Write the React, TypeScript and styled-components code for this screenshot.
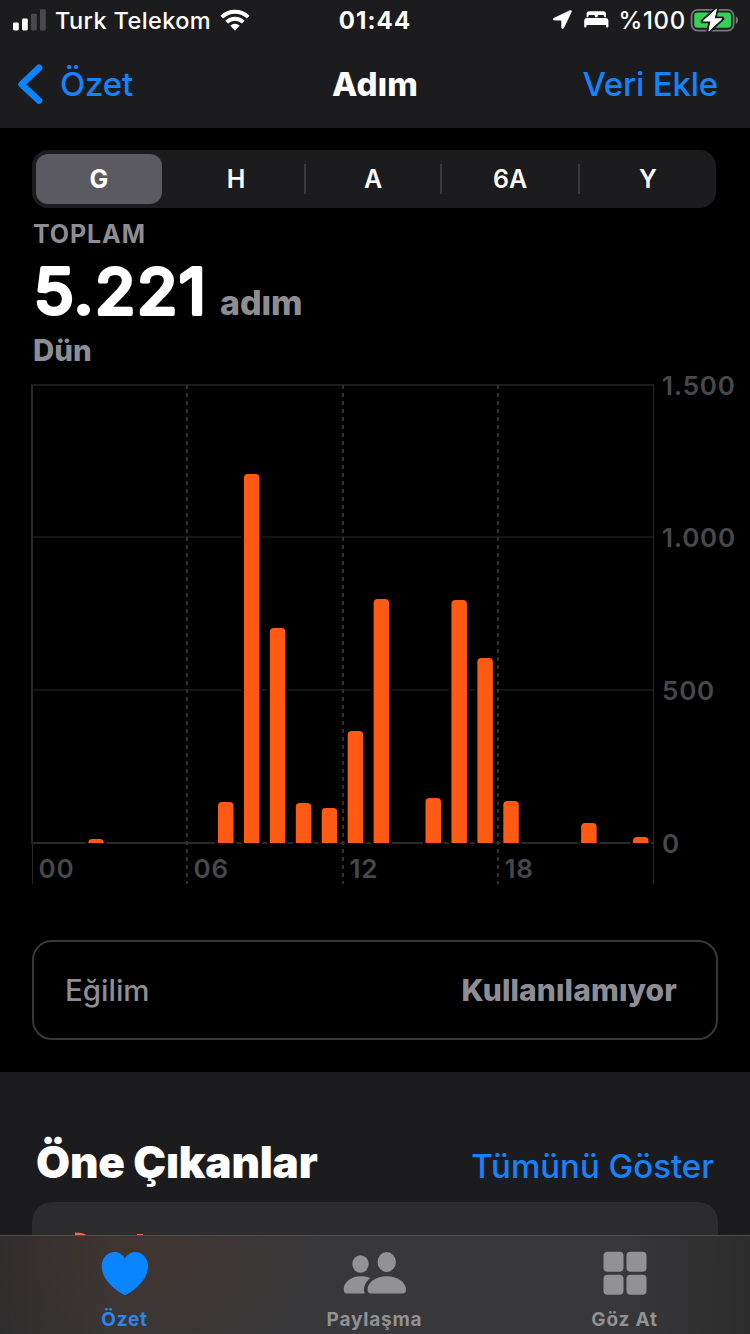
import React from "react";
import styled, { createGlobalStyle } from "styled-components";

const Global = createGlobalStyle`
  * { box-sizing: border-box; }
  body { margin: 0; background: #000; }
`;

const BLUE = "#1583fb";
const GRAY = "#8e8d93";
const ORANGE = "#ff5a13";

const Screen = styled.div`
  width: 750px;
  height: 1334px;
  display: flex;
  flex-direction: column;
  overflow: hidden;
  background: #000;
  color: #fff;
  font-family: Inter, "Noto Sans", sans-serif;
`;

const Label = styled.span<{ $size: number; $weight?: number; $color?: string; $track?: number; $line?: number }>`
  font-size: ${(p) => p.$size}px;
  font-weight: ${(p) => p.$weight ?? 400};
  color: ${(p) => p.$color ?? "#fff"};
  letter-spacing: ${(p) => p.$track ?? 0}px;
  line-height: ${(p) => p.$line ?? 40}px;
  white-space: nowrap;
`;

const Header = styled.header`
  height: 128px;
  flex: none;
  background: #1c1c1e;
`;

const StatusBar = styled.div`
  height: 41px;
  display: grid;
  grid-template-columns: 1fr auto 1fr;
  align-items: center;
  padding: 0 11px;
`;

const StatusGroup = styled.div<{ $end?: boolean }>`
  display: flex;
  align-items: center;
  justify-content: ${(p) => (p.$end ? "flex-end" : "flex-start")};
  padding-left: ${(p) => (p.$end ? 0 : 2)}px;
  svg { display: block; flex: none; margin-bottom: 2px; }
`;

const Gap = styled.span<{ $w: number }>`
  flex: none;
  width: ${(p) => p.$w}px;
`;

const NavBar = styled.nav`
  height: 86px;
  display: grid;
  grid-template-columns: 1fr auto 1fr;
  align-items: center;
  padding: 0 17px;
`;

const BackLink = styled.a`
  display: flex;
  align-items: center;
  gap: 17px;
`;

const NavAction = styled.a`
  text-align: right;
  padding-right: 15px;
`;

const Content = styled.main`
  flex: 1;
  min-height: 0;
  overflow: hidden;
  display: flex;
  flex-direction: column;
`;

const Segments = styled.div`
  flex: none;
  margin: 22px 34px 0 32px;
  height: 58px;
  padding: 4px 0 4px 4px;
  border-radius: 16px;
  background: #1c1c1f;
  display: flex;
  align-items: center;
`;

const Segment = styled.button<{ $w: number; $active?: boolean }>`
  flex: none;
  width: ${(p) => p.$w}px;
  height: 50px;
  padding: 0;
  border: 0;
  border-radius: 12px;
  background: ${(p) => (p.$active ? "#5b5a60" : "transparent")};
  font-family: inherit;
`;

const Divider = styled.span<{ $hidden?: boolean }>`
  flex: none;
  width: 2px;
  height: 30px;
  margin-left: ${(p) => (p.$hidden ? "4px" : "0")};
  background: ${(p) => (p.$hidden ? "transparent" : "#3a3a3e")};
`;

const Summary = styled.section`
  flex: none;
  height: 176px;
  padding: 6px 33px 0;
  display: flex;
  flex-direction: column;
`;

const TotalRow = styled.div`
  height: 76px;
  display: flex;
  align-items: flex-end;
  svg { display: block; overflow: visible; }
`;

const ChartFrame = styled.figure`
  flex: none;
  margin: -8px 0 0;
  height: 516px;
  svg { display: block; overflow: visible; }
`;

const TrendCard = styled.div`
  flex: none;
  margin: 48px 32px 32px;
  height: 100px;
  border: 2px solid #38383a;
  border-radius: 20px;
  padding: 0 39px 0 31px;
  display: flex;
  align-items: center;
  justify-content: space-between;
`;

const Highlights = styled.section`
  flex: 1;
  background: #1c1c1e;
  padding: 65px 32px 0;
`;

const HighlightsHeader = styled.div`
  height: 65px;
  padding: 0 4px;
  display: flex;
  align-items: baseline;
  justify-content: space-between;
`;

const HighlightCard = styled.div`
  height: 60px;
  border-radius: 20px;
  background: #2c2c2e;
  svg { display: block; }
`;

const TabBar = styled.footer`
  flex: none;
  height: 99px;
  border-top: 1px solid #4d4d4e;
  display: grid;
  grid-template-columns: repeat(3, 250px);
  background:
    radial-gradient(ellipse 190px 130px at 135px 20px, rgba(72, 48, 38, 0.5), transparent),
    linear-gradient(90deg, #2d2d2e 0, #38383a 120px, #38383a 620px, #2c2c2d 750px);
`;

const Tab = styled.a`
  display: flex;
  flex-direction: column;
  align-items: center;
  padding: 15px 1px 0 0;
  svg { display: block; flex: none; }
`;

const SignalIcon = () => (
  <svg width="34" height="22" viewBox="0 0 34 22">
    <rect x="0" y="13.5" width="5.8" height="8" rx="1.4" fill="#fff" />
    <rect x="9" y="9.5" width="5.8" height="12" rx="1.4" fill="#fff" />
    <rect x="18" y="4.8" width="5.8" height="16.7" rx="1.4" fill="#4a4a4c" />
    <rect x="27" y="0.3" width="5.8" height="21.2" rx="1.4" fill="#4a4a4c" />
  </svg>
);

const WifiIcon = () => (
  <svg width="30" height="22" viewBox="0 0 30 22" fill="none" stroke="#fff" strokeWidth="3.9">
    <path d="M1.8 8.2a18.8 18.8 0 0 1 26.4 0" />
    <path d="M6.7 13.1a11.8 11.8 0 0 1 16.6 0" />
    <path d="M10.3 16.8a6.7 6.7 0 0 1 9.4 0L15 21.6z" fill="#fff" stroke="none" />
  </svg>
);

const LocationIcon = () => (
  <svg width="19" height="19" viewBox="0 0 19 19">
    <path d="M17.2.5.9 8.2c-1 .5-.8 1.9.4 1.9l7.3.1.1 7.4c0 1.2 1.5 1.4 2 .3L18.4 1.7c.4-.9-.4-1.6-1.2-1.2z" fill="#fff" stroke="#fff" strokeWidth="0.6" />
  </svg>
);

const BedIcon = () => (
  <svg width="25" height="17" viewBox="0 0 25 17" fill="#fff">
    <path d="M2.6 6.2V3c0-1.9.9-2.8 2.8-2.8h13.7c1.9 0 2.8.9 2.8 2.8v3.2h-1.7V5.4c0-1-.5-1.5-1.500-1.500h-3.700c-1 0-1.500.5-1.500 1.500v.8h-2.500v-.8c0-1-.5-1.500-1.500-1.500H5.800c-1 0-1.500.5-1.500 1.500v.8z" />
    <path d="M.2 15.600V10c0-1.900 1-2.900 2.900-2.900h18.400c1.900 0 2.900 1 2.900 2.900v5.600c0 1.300-2.300 1.300-2.300 0v-1.500H2.500v1.500c0 1.300-2.300 1.300-2.300 0z" />
  </svg>
);

const BatteryIcon = () => (
  <svg width="49" height="26" viewBox="0 0 49 26">
    <rect x="1.600" y="2.800" width="42" height="20.800" rx="6" fill="none" stroke="#77777a" strokeWidth="1.800" />
    <rect x="4.200" y="5.600" width="36.800" height="15.200" rx="3.200" fill="#33d158" />
    <path d="M45.800 9.500c3 1.200 3 6.200 0 7.400z" fill="#77777a" />
    <path d="M26.800 1.700 12.700 14.300h7.900l-2.200 10.200L32.400 11.600h-7.900z" fill="#fff" stroke="#1c1c1e" strokeWidth="4" strokeLinejoin="round" paintOrder="stroke" />
    <path d="M26.300 2.300 13.700 13.800h7.500l-2 9.700L31.400 12h-7.500z" fill="#fff" stroke="#fff" strokeWidth="1" strokeLinejoin="round" />
  </svg>
);

const BackIcon = () => (
  <svg width="26" height="42" viewBox="0 0 26 42">
    <path d="M22 4.800 4.500 21.300 22 37.600" fill="none" stroke="#0a84ff" strokeWidth="6.600" strokeLinecap="round" strokeLinejoin="round" />
  </svg>
);

const HeartIcon = () => (
  <svg width="48" height="46" viewBox="0 0 48 46">
    <path d="M23.900 7.600C21.500 3.400 17.800 1 13.500 1 6.300 1 .7 7.200.7 15.300c0 10.500 8.400 20.300 21 28 1.600.9 2.800.9 4.400 0 12.600-7.700 21-17.500 21-28C47.100 7.200 41.500 1 34.300 1c-4.300 0-8 2.400-10.400 6.600z" fill="#0a84ff" />
  </svg>
);

const PeopleIcon = () => (
  <svg width="64" height="46" viewBox="0 0 64 46" fill="#929294">
    <ellipse cx="17.500" cy="13" rx="8.200" ry="8.800" />
    <ellipse cx="43.700" cy="11" rx="9.200" ry="10" />
    <path d="M27.300 27c-2.600-1.100-6-1.700-9.800-1.700C7.600 25.300.7 31.800.7 38c0 3 1 4.500 3.200 4.500h17.800c-2-5 .2-11.300 5.600-15.500z" />
    <path d="M43.700 25.300c-11.900 0-19.200 7-19.200 13.200 0 2.700 1 4 3.400 4H59.600c2.400 0 3.400-1.300 3.400-4 0-6.200-7.400-13.200-19.300-13.200z" />
  </svg>
);

const GridIcon = () => (
  <svg width="44" height="46" viewBox="0 0 44 46" fill="#929294">
    <rect x="0.500" y="0.800" width="20" height="20" rx="4" />
    <rect x="23.500" y="0.800" width="20" height="20" rx="4" />
    <rect x="0.500" y="23.800" width="20" height="20" rx="4" />
    <rect x="23.500" y="23.800" width="20" height="20" rx="4" />
  </svg>
);

/* Chart coordinates start at the top of the figure; the zero line is at y = 467. */
const ZERO = 467;
const bars = [
  { hour: 2, height: 4 },
  { hour: 7, height: 41 },
  { hour: 8, height: 369 },
  { hour: 9, height: 215 },
  { hour: 10, height: 40 },
  { hour: 11, height: 35 },
  { hour: 12, height: 112 },
  { hour: 13, height: 244 },
  { hour: 15, height: 45 },
  { hour: 16, height: 243 },
  { hour: 17, height: 185 },
  { hour: 18, height: 42 },
  { hour: 21, height: 20 },
  { hour: 23, height: 6 },
];
const rows = [
  { y: 9, label: "1.500" },
  { y: 161, label: "1.000" },
  { y: 314, label: "500" },
  { y: 467, label: "0" },
];
const columns = [
  { x: 32, label: "00" },
  { x: 187, label: "06" },
  { x: 343, label: "12" },
  { x: 498, label: "18" },
];

const AxisText = styled.text`
  font-size: 26px;
  font-weight: 600;
  letter-spacing: 0.8px;
  fill: #48484b;
`;

const TotalText = styled.text`
  font-size: 63px;
  font-weight: 400;
  letter-spacing: 1.7px;
  fill: #fff;
  stroke: #fff;
  stroke-width: 4px;
  stroke-linejoin: round;
`;

const barPath = (hour: number, height: number) => {
  const x = 36.4 + hour * 25.94;
  const r = Math.min(4, height);
  return `M${x} ${ZERO}V${ZERO - height + r}q0 ${-r} ${r} ${-r}h${15.5 - 2 * r}q${r} 0 ${r} ${r}V${ZERO}z`;
};

const StepsChart = () => (
  <svg width="750" height="516" viewBox="0 0 750 516">
    {rows.map((r) => (
      <React.Fragment key={r.label}>
        <line x1="31" x2="654" y1={r.y} y2={r.y} stroke={r.y === ZERO ? "#29292b" : r.y === 9 ? "#1c1c1e" : "#151517"} strokeWidth="2" />
        <AxisText x="662" y={r.y + 10}>{r.label}</AxisText>
      </React.Fragment>
    ))}
    <line x1="32" x2="32" y1="9" y2="467" stroke="#29292b" strokeWidth="2" />
    <line x1="32.500" x2="32.500" y1="467" y2="508" stroke="#29292b" strokeWidth="1" />
    <line x1="653.500" x2="653.500" y1="9" y2="508" stroke="#29292b" strokeWidth="1" />
    {bars.map((b) => (
      <path key={b.hour} d={barPath(b.hour, b.height)} fill="#000" stroke="#000" strokeWidth="5" />
    ))}
    {columns.map((c) => (
      <React.Fragment key={c.label}>
        {c.x > 32 && (
          <line x1={c.x} x2={c.x} y1="9" y2="508" stroke="#303032" strokeWidth="2" strokeDasharray="4 4" />
        )}
        <AxisText x={c.x + 6.500} y="502">{c.label}</AxisText>
      </React.Fragment>
    ))}
    {bars.map((b) => (
      <path key={b.hour} d={barPath(b.hour, b.height)} fill={ORANGE} />
    ))}
  </svg>
);

const segments = [
  { label: "G", width: 126 },
  { label: "H", width: 136 },
  { label: "A", width: 134 },
  { label: "6A", width: 136 },
  { label: "Y", width: 136 },
];

export default function App() {
  return (
    <Screen>
      <Global />
      <Header>
        <StatusBar>
          <StatusGroup>
            <SignalIcon />
            <Gap $w={8} />
            <Label $size={23.5} $weight={500} $track={0.4}>Turk Telekom</Label>
            <Gap $w={9} />
            <WifiIcon />
          </StatusGroup>
          <Label $size={24} $weight={700} $track={1.1}>01:44</Label>
          <StatusGroup $end>
            <LocationIcon />
            <Gap $w={12} />
            <BedIcon />
            <Gap $w={9} />
            <Label $size={24} $weight={450} $track={0.7}>%100</Label>
            <Gap $w={4} />
            <BatteryIcon />
          </StatusGroup>
        </StatusBar>
        <NavBar>
          <BackLink>
            <BackIcon />
            <Label $size={33} $weight={500} $color={BLUE} $track={-0.2}>Özet</Label>
          </BackLink>
          <Label $size={33} $weight={800} $track={0.2}>Adım</Label>
          <NavAction>
            <Label $size={33} $weight={500} $color={BLUE} $track={-0.2}>Veri Ekle</Label>
          </NavAction>
        </NavBar>
      </Header>
      <Content>
        <Segments>
          {segments.map((s, i) => (
            <React.Fragment key={s.label}>
              {i > 0 && <Divider $hidden={i === 1} />}
              <Segment $w={s.width} $active={i === 0}>
                <Label $size={25} $weight={i === 0 ? 700 : 600}>{s.label}</Label>
              </Segment>
            </React.Fragment>
          ))}
        </Segments>
        <Summary>
          <Label $size={25} $weight={750} $color={GRAY} $track={0.9}>TOPLAM</Label>
          <TotalRow>
            <svg width="187" height="76" viewBox="0 0 187 76">
              <TotalText x="0.800" y="59.500" transform="scale(1.05 1)">5.221</TotalText>
            </svg>
            <Label $size={34} $weight={800} $color={GRAY} $track={-0.1} $line={55}>adım</Label>
          </TotalRow>
          <Label $size={29.5} $weight={800} $color={GRAY}>Dün</Label>
        </Summary>
        <ChartFrame>
          <StepsChart />
        </ChartFrame>
        <TrendCard>
          <Label $size={29.5} $weight={500} $color={GRAY} $track={0}>Eğilim</Label>
          <Label $size={30} $weight={800} $color={GRAY} $track={0.1}>Kullanılamıyor</Label>
        </TrendCard>
        <Highlights>
          <HighlightsHeader>
            <Label $size={44} $weight={900} $track={-0.2} $line={50}>Öne Çıkanlar</Label>
            <Label $size={33} $weight={500} $color={BLUE}>Tümünü Göster</Label>
          </HighlightsHeader>
          <HighlightCard>
            <svg width="200" height="33" viewBox="0 0 200 33">
              <path d="M43 30.500c5 0 9 .8 12 3v.5H43z" fill="#f06a42" />
              <rect x="105" y="32" width="6" height="2" fill="#f06a42" />
            </svg>
          </HighlightCard>
        </Highlights>
      </Content>
      <TabBar>
        <Tab>
          <HeartIcon />
          <Label $size={19} $weight={650} $color="#2b86ee" $track={0.8} $line={46}>Özet</Label>
        </Tab>
        <Tab>
          <PeopleIcon />
          <Label $size={19} $weight={650} $color="#929294" $track={0.8} $line={46}>Paylaşma</Label>
        </Tab>
        <Tab>
          <GridIcon />
          <Label $size={19} $weight={650} $color="#929294" $track={0.8} $line={46}>Göz At</Label>
        </Tab>
      </TabBar>
    </Screen>
  );
}
